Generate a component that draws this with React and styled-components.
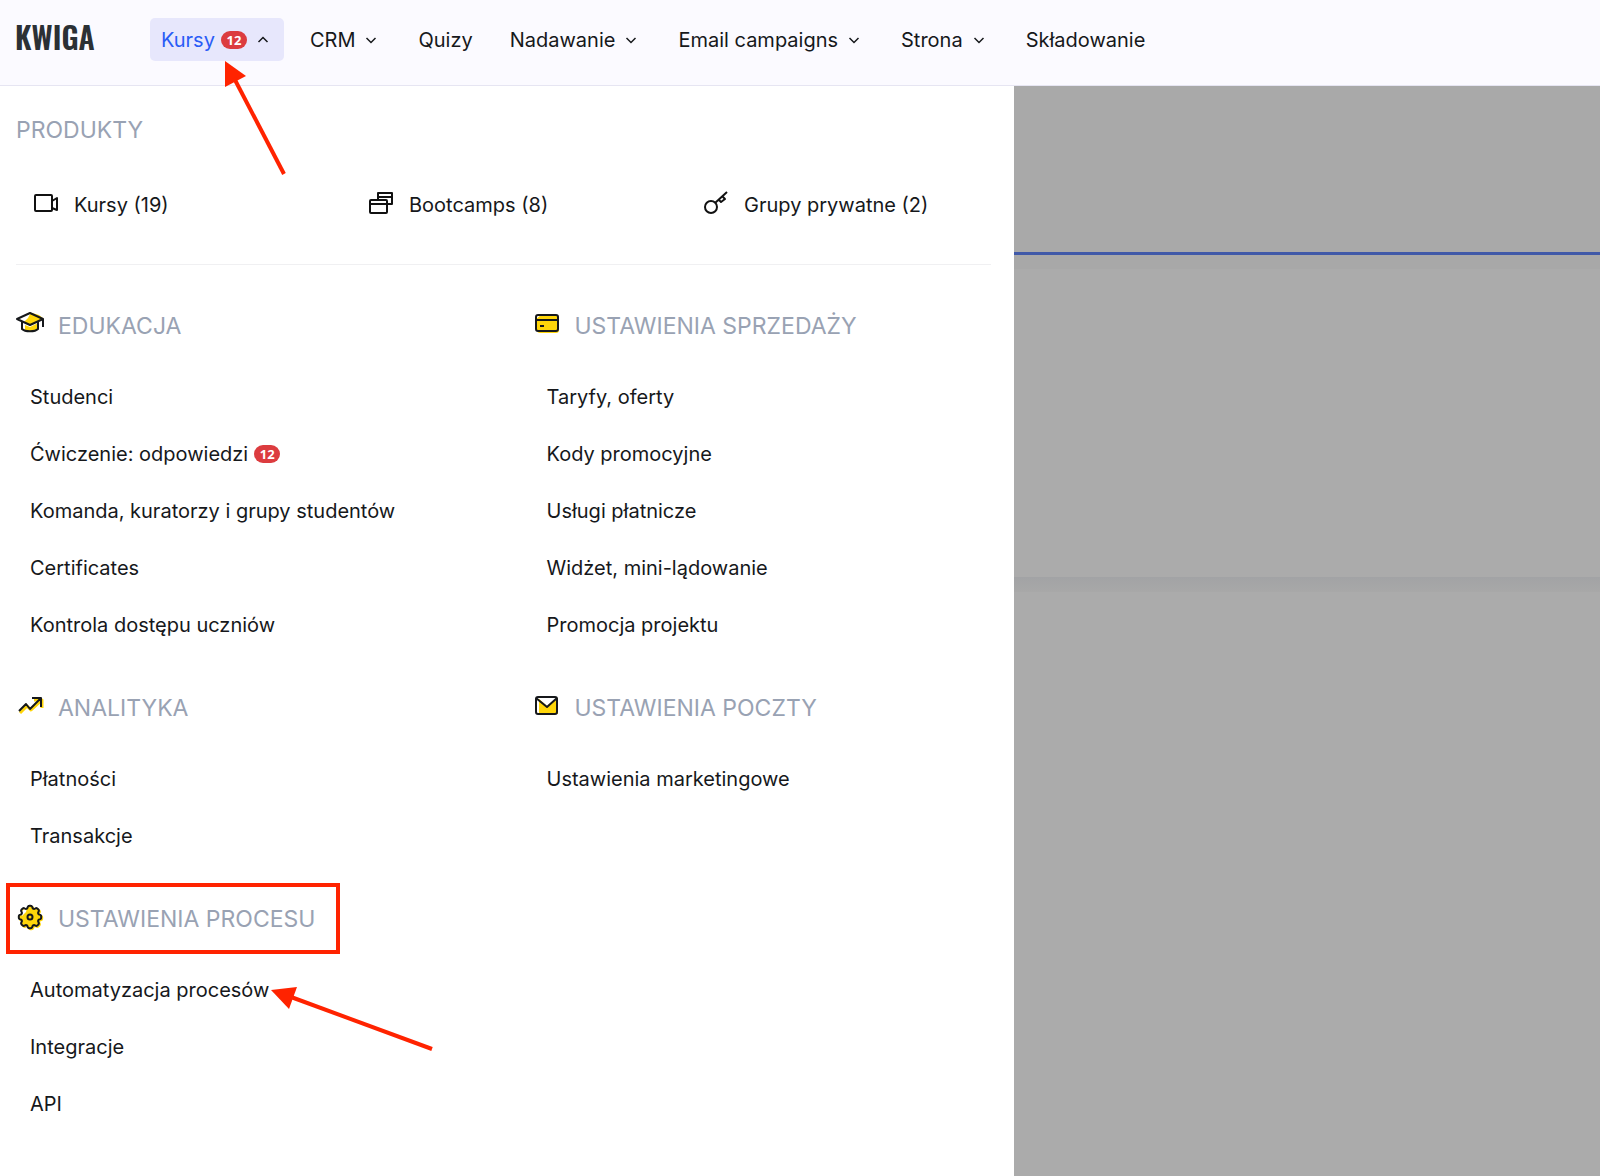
import React, { useState } from "react";
import styled, { createGlobalStyle, css } from "styled-components";

const GlobalStyle = createGlobalStyle`
  *, *::before, *::after {
    box-sizing: border-box;
  }

  body {
    margin: 0;
    background: #ababab;
    color: #16181b;
    font-family: Inter, "Liberation Sans", sans-serif;
    font-size: 20px;
    line-height: 30px;
  }

  a {
    color: inherit;
    text-decoration: none;
  }

  h2, ul {
    margin: 0;
    padding: 0;
    font-weight: 400;
    list-style: none;
  }
`;

const Page = styled.div`
  min-height: 100vh;
  display: flex;
  flex-direction: column;
`;

const Header = styled.header`
  display: flex;
  align-items: center;
  height: 86px;
  padding: 0 16px 6px 15px;
  background: #fbfaff;
  border-bottom: 1px solid #e6e5f2;
`;

const Logo = styled.a`
  flex: 0 0 135px;
  padding-bottom: 5px;
  color: #2b3035;
  font-family: "Oswald", "Liberation Sans Narrow", "DejaVu Sans Condensed", sans-serif;
  font-size: 30px;
  font-weight: 600;
`;

const Nav = styled.nav`
  display: flex;
  align-items: center;
  gap: 15px;
`;

const NavButton = styled.button`
  position: relative;
  display: flex;
  align-items: center;
  gap: 6px;
  height: 43px;
  padding: 0 11px;
  border: 0;
  border-radius: 5px;
  background: transparent;
  color: inherit;
  font: inherit;
  white-space: nowrap;
  cursor: pointer;

  ${(props) =>
    props.$active &&
    css`
      background: #e7e7fc;
      color: #2a5cf6;
    `}
`;

const Chevron = styled.svg`
  width: 20px;
  height: 20px;
  color: #16181b;
  transform: ${(props) => (props.$open ? "rotate(180deg)" : "none")};
`;

const Badge = styled.span`
  display: inline-flex;
  align-items: center;
  justify-content: center;
  width: 26px;
  height: 18px;
  border-radius: 9px;
  background: #dc3c3f;
  color: #fff;
  font-family: "Noto Sans", sans-serif;
  font-size: 13px;
  font-weight: 700;
  line-height: 18px;
`;

const Body = styled.main`
  flex: 1;
  display: grid;
  grid-template-columns: minmax(0, 1014fr) minmax(0, 586fr);
`;

const MenuPanel = styled.section`
  padding: 29px 23px 40px 16px;
  background: #fff;
`;

const Title = styled.h2`
  position: relative;
  display: flex;
  align-items: center;
  gap: 14px;
  height: 30px;
  color: #99a2b3;
  font-size: 23px;
  line-height: 30px;
  text-transform: uppercase;
`;

const TitleIcon = styled.svg`
  flex: none;
  width: 28px;
  height: 28px;
  margin-bottom: 4px;
  overflow: visible;
`;

const Products = styled.div`
  display: grid;
  grid-template-columns: repeat(3, 1fr);
  gap: 30px;
  padding: 45px 0 44px;
  border-bottom: 1px solid #f0f0f2;
`;

const Product = styled.a`
  display: flex;
  align-items: center;
  gap: 14px;
  padding-left: 18px;
`;

const ProductIcon = styled.svg`
  width: 26px;
  height: 26px;
  margin-bottom: 4px;
`;

const Sections = styled.div`
  display: grid;
  grid-template-columns: repeat(2, 1fr);
  gap: 58px;
  padding-top: 46px;
`;

const Column = styled.div`
  display: flex;
  flex-direction: column;
  gap: 40px;
`;

const List = styled.ul`
  margin-top: 27px;
`;

const Item = styled.li`
  display: flex;
  align-items: center;
  gap: 6px;
  height: 57px;
  padding-left: 14px;
`;

const ItemLink = styled.a`
  position: relative;
`;

/* dimmed page under the open menu */
const Dimmed = styled.div`
  display: flex;
  flex-direction: column;
  background: #ababab;
`;

const DimmedTop = styled.div`
  height: 169px;
  background: #a9a9a9;
  border-bottom: 3px solid #4059a8;
`;

const DimmedCard = styled.div`
  height: 322px;
  border-top: 14px solid #a8a8a8;
`;

const DimmedShadow = styled.div`
  height: 15px;
  background: linear-gradient(#a2a3a5, #a8a8a8);
`;

const Highlight = styled.span`
  position: absolute;
  inset: -21px auto -20px -10px;
  width: 334px;
  border: 4px solid #ff2300;
  pointer-events: none;
`;

const Arrow = styled.svg`
  position: absolute;
  z-index: 2;
  left: ${(props) => props.$left};
  top: ${(props) => props.$top};
  overflow: visible;
  pointer-events: none;
  fill: #ff2300;
  stroke: #ff2300;
`;

const YELLOW = "#ffd60a";

const icons = {
  cap: (
    <>
      <path d="M14 4 L18 4 L27 9 L14 15 L8 12 L12 8 Z" fill={YELLOW} stroke="none" />
      <path d="M9 15 L14 17 L22 13 V19 C20 22 12 22 9 20 Z" fill={YELLOW} stroke="none" />
      <path d="M16 3 L23 5 L28 9 L25 9 Z" fill={YELLOW} stroke="none" />
      <path d="M1 9 L14 3 L27 9 L14 15 Z" />
      <path d="M6 12 V19 C9 22 19 22 22 19 V12 M27 9 V17" />
    </>
  ),
  card: (
    <>
      <rect x="4" y="5" width="22" height="18" rx="3" fill={YELLOW} stroke="none" />
      <path d="M3 5 H8 L3 9 Z" fill="#fff" stroke="none" />
      <rect x="3" y="5" width="22" height="16" rx="2" />
      <path d="M3 10 H25 M7 16 H11" />
    </>
  ),
  chart: (
    <>
      <path d="M4 21 L11 14 L15 18 L26 8 M18 8 H26 V16" stroke={YELLOW} strokeWidth="3" />
      <path d="M3 19 L10 12 L14 17 L24 7 M16 6 H25 V15" />
    </>
  ),
  mail: (
    <>
      <rect x="6" y="6" width="19" height="16" fill={YELLOW} stroke="none" />
      <path d="M5 6 H24 L14 14 Z" fill="#fff" stroke="none" />
      <rect x="3" y="5" width="21" height="17" rx="2" />
      <path d="M3 6 L14 15 L24 6" />
    </>
  ),
};

const sections = [
  [
    {
      title: "Edukacja",
      icon: "cap",
      items: [
        { label: "Studenci" },
        { label: "Ćwiczenie: odpowiedzi", count: 12 },
        { label: "Komanda, kuratorzy i grupy studentów" },
        { label: "Certificates" },
        { label: "Kontrola dostępu uczniów" },
      ],
    },
    {
      title: "Analityka",
      icon: "chart",
      items: [{ label: "Płatności" }, { label: "Transakcje" }],
    },
    {
      title: "Ustawienia procesu",
      icon: "gear",
      marked: true,
      items: [
        { label: "Automatyzacja procesów", marked: true },
        { label: "Integracje" },
        { label: "API" },
      ],
    },
  ],
  [
    {
      title: "Ustawienia sprzedaży",
      icon: "card",
      items: [
        { label: "Taryfy, oferty" },
        { label: "Kody promocyjne" },
        { label: "Usługi płatnicze" },
        { label: "Widżet, mini-lądowanie" },
        { label: "Promocja projektu" },
      ],
    },
    {
      title: "Ustawienia poczty",
      icon: "mail",
      items: [{ label: "Ustawienia marketingowe" }],
    },
  ],
];

const navItems = [
  { label: "CRM", menu: true },
  { label: "Quizy" },
  { label: "Nadawanie", menu: true },
  { label: "Email campaigns", menu: true },
  { label: "Strona", menu: true },
  { label: "Składowanie" },
];

const gearPath = () => {
  const teeth = 8;
  const points = [];
  for (let i = 0; i <= 128; i += 1) {
    const angle = (i / 128) * Math.PI * 2;
    const r = 10 + 1.2 * Math.tanh(Math.cos(angle * teeth) * 2 + 0.6);
    points.push(
      `${(14 + r * Math.sin(angle)).toFixed(2)} ${(14 - r * Math.cos(angle)).toFixed(2)}`
    );
  }
  return `M${points.join("L")}Z`;
};

const Gear = () => (
  <>
    <path d={gearPath()} fill={YELLOW} stroke={YELLOW} transform="translate(1 1)" />
    <path d="M5 11 L7 7 L11 5 L10 9 L6 13 Z" fill="#fff" stroke="none" />
    <path d={gearPath()} />
    <circle cx="14" cy="14" r="2.5" />
  </>
);

const ChevronIcon = ({ open }) => (
  <Chevron
    $open={open}
    viewBox="0 0 20 20"
    fill="none"
    stroke="currentColor"
    strokeWidth="1.5"
    aria-hidden="true"
  >
    <path d="M5.5 8 L10 12.5 L14.5 8" />
  </Chevron>
);

const productIconProps = {
  viewBox: "0 0 26 26",
  fill: "none",
  stroke: "#111",
  strokeWidth: 2,
  strokeLinejoin: "round",
  "aria-hidden": true,
};

const Section = ({ title, icon, items, marked }) => (
  <section>
    <Title>
      <TitleIcon
        viewBox="0 0 28 28"
        fill="none"
        stroke="#16181b"
        strokeWidth="2"
        strokeLinejoin="round"
        aria-hidden="true"
      >
        {icon === "gear" ? <Gear /> : icons[icon]}
      </TitleIcon>
      {title}
      {marked && <Highlight />}
    </Title>
    <List>
      {items.map((item) => (
        <Item key={item.label}>
          <ItemLink href="#">
            {item.label}
            {item.marked && (
              <Arrow $left="calc(100% + 2px)" $top="12px" width="161" height="62">
                <path d="M0 3 L26 0 L18 22 Z" stroke="none" />
                <path d="M20 10 L161 62" strokeWidth="4" />
              </Arrow>
            )}
          </ItemLink>
          {item.count && <Badge>{item.count}</Badge>}
        </Item>
      ))}
    </List>
  </section>
);

const App = () => {
  const [isOpen, setIsOpen] = useState(true);

  return (
    <Page>
      <GlobalStyle />
      <Header>
        <Logo href="#">KWIGA</Logo>
        <Nav>
          <NavButton
            $active={isOpen}
            aria-expanded={isOpen}
            onClick={() => setIsOpen((prev) => !prev)}
          >
            Kursy
            <Badge>12</Badge>
            <ChevronIcon open={isOpen} />
            <Arrow $left="75px" $top="43px" width="60" height="114">
              <path d="M0 0 L21 15 L0 26 Z" stroke="none" />
              <path d="M9 17 L59 113" strokeWidth="4" />
            </Arrow>
          </NavButton>
          {navItems.map(({ label, menu }) => (
            <NavButton key={label}>
              {label}
              {menu && <ChevronIcon />}
            </NavButton>
          ))}
        </Nav>
      </Header>

      <Body>
        <MenuPanel>
          <Title>Produkty</Title>
          <Products>
            <Product href="#">
              <ProductIcon {...productIconProps}>
                <rect x="1" y="5" width="17" height="16" rx="1" />
                <path d="M18 11 L23 8 V20 L18 18" />
              </ProductIcon>
              Kursy (19)
            </Product>
            <Product href="#">
              <ProductIcon {...productIconProps}>
                <rect x="1" y="10" width="17" height="13" rx="1" />
                <path d="M1 14 H18 M9 10 V3 H23 V14 H18 M9 7 H23" />
              </ProductIcon>
              Bootcamps (8)
            </Product>
            <Product href="#">
              <ProductIcon {...productIconProps}>
                <circle cx="7" cy="17" r="6" />
                <path d="M11 13 L23 2 M15 10 L17 12 L21 9 L19 7" />
              </ProductIcon>
              Grupy prywatne (2)
            </Product>
          </Products>
          <Sections>
            {sections.map((column, index) => (
              <Column key={index}>
                {column.map((section) => (
                  <Section key={section.title} {...section} />
                ))}
              </Column>
            ))}
          </Sections>
        </MenuPanel>
        <Dimmed>
          <DimmedTop />
          <DimmedCard />
          <DimmedShadow />
        </Dimmed>
      </Body>
    </Page>
  );
};

export default App;
